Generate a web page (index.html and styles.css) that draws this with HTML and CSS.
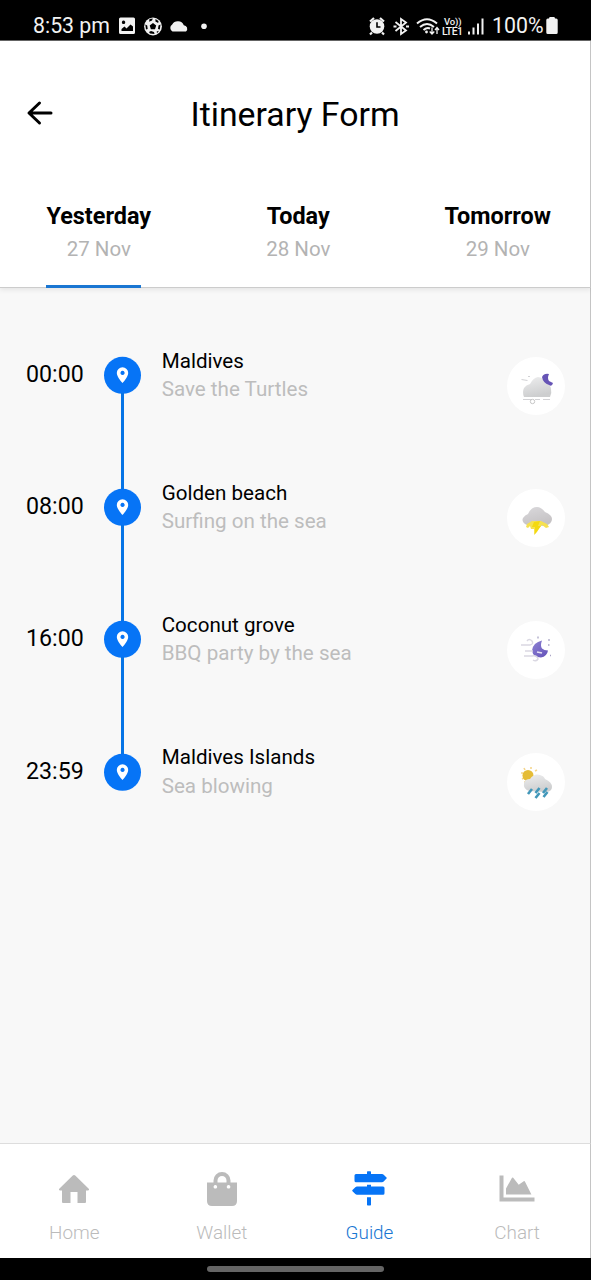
FILE: index.html
```html
<!DOCTYPE html>
<html lang="en">
<head>
<meta charset="utf-8">
<title>Itinerary Form</title>
<link rel="stylesheet" href="styles.css">
</head>
<body>
<div class="phone">
  <div class="status">
    <span class="clock">8:53 pm</span>
    <svg class="status-left" width="92" height="22" viewBox="0 0 92 22" fill="#f2f2f2">
      <path fill-rule="evenodd" d="M3.500 2.500h13q1.500 0 1.500 1.500v13.500q0 1.500-1.500 1.500h-13q-1.500 0-1.500-1.500v-13.500Q2 2.500 3.500 2.500ZM4.500 16h11.500v-4.500l-2.500-2-4 4-2-2-3 2.500ZM6.500 5.600a1.700 1.700 0 1 0 .1 0Z"/>
      <circle cx="36" cy="11.500" r="8.900"/>
      <path fill="#000" d="m36 8 3.200 2.400-1.200 3.800h-4.100l-1.200-3.800ZM32.500 4l3.300-.6L35 5.500l-2.900 1.200ZM38.500 4l3 1.900-.3 2.200-2.800-1.500ZM28.300 9.500l1.900 1 .5 3.500-1.700.5ZM43.500 9.500l-2 1-.5 3.500 1.800.5ZM32 17l2-1 3 1 .5 2-4.500-.5ZM39.700 16.500l2.300-.8-2 2.500Z"/>
      <path d="M55.500 16.500a4 4 0 0 1-.3-7 6.500 6.500 0 0 1 11.600.7 3.600 3.600 0 0 1 2.200 6.300Z"/>
      <circle cx="87" cy="11.300" r="2.800"/>
    </svg>
    <svg class="status-right" width="118" height="22" viewBox="0 0 118 22" fill="none" stroke="#f2f2f2" stroke-width="1.800">
      <circle cx="9" cy="11.500" r="7.300" fill="#f2f2f2" stroke="none"/>
      <path d="M2 6.500 6 3M16 6.500 12 3M4 17.500l-2 2M14 17.500l2 2" stroke-width="2.200"/>
      <path d="M9 7.300V12h3.500" stroke="#000" stroke-width="1.600"/>
      <path d="m27.500 7 10.500 8.500-5 3.500V4l5 3.500L27.500 16" stroke-width="1.800"/>
      <path d="M25.500 11.500h3M38 11.500h3"/>
      <path d="M49 8.500q10-8.500 20 0M52 12q7-6 14 0M55.500 15q3.500-3 6.500-1.500" stroke-width="2"/>
      <circle cx="58.500" cy="17" r="1.400" fill="#f2f2f2" stroke="none"/>
      <path d="M64 12.500v6.500m-2.300-2.500 2.300 2.500 2.300-2.500M69 19v-6.500m-2 2.500 2-2.500 2 2.500" stroke-width="1.300"/>
      <text class="lte" x="76" y="9.500" textLength="17.500">Vo))</text>
      <text class="lte large" x="74" y="19.500" textLength="21">LTE1</text>
      <path d="M101 16.500V19.500M105.500 12.500v7M110 8.500v11M114.500 3.500V19.500" stroke-width="2"/>
    </svg>
    <span class="percent">100%</span>
    <svg width="12" height="20" viewBox="0 0 12 20" fill="#f2f2f2"><path d="M4 1h4q1 0 1 1.500h1.200q1.500 0 1.500 1.500v12.500q0 1.500-1.500 1.500H1.800q-1.500 0-1.500-1.500V4q0-1.500 1.500-1.500H3Q3 1 4 1Z"/></svg>
  </div>

  <header class="header">
    <div class="topbar">
      <svg class="back" width="28" height="28" viewBox="0 0 28 28" fill="none" stroke="#000" stroke-width="3" stroke-linecap="round" stroke-linejoin="round"><path d="M25 14H3.500M13.500 4 3 14l10.500 10"/></svg>
      <h1 class="title">Itinerary Form</h1>
    </div>
    <div class="tabs">
      <div class="tab active"><b>Yesterday</b><span>27 Nov</span></div>
      <div class="tab"><b>Today</b><span>28 Nov</span></div>
      <div class="tab"><b>Tomorrow</b><span>29 Nov</span></div>
    </div>
  </header>

  <main class="timeline">
    <div class="stop">
      <span class="time">00:00</span>
      <div class="rail"><svg class="pin" width="37" height="38" viewBox="0 0 37 38"><use href="#pin"/></svg><i class="line"></i></div>
      <div class="info"><span class="place">Maldives</span><span class="note">Save the Turtles</span></div>
      <div class="weather"><svg width="58" height="58" viewBox="0 0 58 58">
        <path d="M17 40q-2-5 0-9 2-3 6-4 3-6 8-7 5 0 8 6 5 2 5 6 1 4-1 8Z" fill="url(#cloud)"/>
        <path d="M35 20q2-4 7-3-2 4 0 7l4 2q-1 4-4 2-6-2-7-8Z" fill="#6654b5"/>
        <path d="M16 42.500h9m3 0h5m3 0h7M14.500 22.500l6 1M21 19.500h2" fill="none" stroke="#d2d2d5" stroke-width="1.200"/>
        <circle cx="25.500" cy="44.500" r="2.200" fill="none" stroke="#c5c5c5"/>
      </svg></div>
    </div>
    <div class="stop">
      <span class="time">08:00</span>
      <div class="rail"><svg class="pin" width="37" height="38" viewBox="0 0 37 38"><use href="#pin"/></svg><i class="line"></i></div>
      <div class="info"><span class="place">Golden beach</span><span class="note">Surfing on the sea</span></div>
      <div class="weather"><svg width="58" height="58" viewBox="0 0 58 58">
        <path d="M20 36q-6-3-4-7 2-3 5-4 3-7 9-7 4 0 8 5 7 3 7 7 0 5-7 7Z" fill="url(#storm)"/>
        <path d="M19 38l1-3 5-3h9l6 3 2 3-3 1-4-3-2 2-3 5-3 3v-6h-3l-1-3-2 2Z" fill="#f6e150"/>
        <path d="m27 33 6-1-2 5h3l-6 8v-7h-3Z" fill="#f4d910"/>
      </svg></div>
    </div>
    <div class="stop">
      <span class="time">16:00</span>
      <div class="rail"><svg class="pin" width="37" height="38" viewBox="0 0 37 38"><use href="#pin"/></svg><i class="line"></i></div>
      <div class="info"><span class="place">Coconut grove</span><span class="note">BBQ party by the sea</span></div>
      <div class="weather"><svg width="58" height="58" viewBox="0 0 58 58">
        <path d="M35 19.500q-2 5 0 8 2 2 6 2-1 6-7 7-8 0-9-7 1-8 10-10Z" fill="url(#moon)"/>
        <path d="M14 24h9q4-1 2-4-3-3-5 0M18 30h8M17 35h8q5-1 6 3-2 3-5 1" fill="none" stroke="#dad8e2" stroke-width="1.400"/>
        <path d="m30 31 5 1" stroke="#e6e2f3" stroke-width="1.600"/>
        <path d="M31 15.500v2M42 18v2M41 24h1.500M43 34.500h1" stroke="#aaa5c5" stroke-width="1.300"/>
      </svg></div>
    </div>
    <div class="stop">
      <span class="time">23:59</span>
      <div class="rail"><svg class="pin" width="37" height="38" viewBox="0 0 37 38"><use href="#pin"/></svg></div>
      <div class="info"><span class="place">Maldives Islands</span><span class="note">Sea blowing</span></div>
      <div class="weather"><svg width="58" height="58" viewBox="0 0 58 58">
        <path d="M14 20h2M15 26l2-1M17 15l1 2M24 14v2M28 18l2-1M18 30v-2" stroke="#f5d68d" stroke-width="1.600"/>
        <circle cx="21" cy="22.500" r="5.500" fill="#e5bc36"/>
        <path d="M22 38q-6-2-5-8 1-4 6-4 4-6 10-4 4 1 5 4 7 3 7 8 0 5-7 5Z" fill="url(#cloud)"/>
        <path d="m21 41 4-5M28.500 40l4-5M36 40l4-5M28.500 45l4-5M36.500 44l4-5" stroke="#4297b9" stroke-width="2.600"/>
      </svg></div>
    </div>
  </main>

  <nav class="nav">
    <div class="item"><svg width="36" height="36" viewBox="0 0 36 36" fill="currentColor"><path d="M18 4q.7 0 1.500.8L33 18q.5 1.200-1 1.500h-2V31q0 1-1 1h-7.500V21h-7v11H7q-1 0-1-1V19.500H4q-1.500-.3-1-1.500L16.500 4.800Q17.300 4 18 4Z"/></svg><span>Home</span></div>
    <div class="item"><svg width="36" height="36" viewBox="0 0 36 36" fill="currentColor"><path fill-rule="evenodd" d="M3 11.500h6.500V9.500a8.500 8.500 0 0 1 17 0v2H33V30q0 5-5 5H8q-5 0-5-5ZM13.500 11.500h9v-2a4.500 4.500 0 0 0-9 0ZM11.300 14a1.800 1.800 0 1 0 .1 0ZM24.500 14a1.800 1.800 0 1 0 .1 0Z"/></svg><span>Wallet</span></div>
    <div class="item selected"><svg width="36" height="36" viewBox="0 0 36 36" fill="currentColor"><path d="M16 3V1q0-.7.700-.7h2.600q.7 0 .7.700v2h11q1 0 1.700.7L35.500 6.500q.6.500 0 1.100L32.700 10.500q-.7.700-1.700.7H5q-1.500 0-1.500-1.500V4.500Q3.500 3 5 3ZM16 15.500v-1.800h4v1.800h12q1.500 0 1.500 1.500v5.300q0 1.500-1.500 1.500H6q-1 0-1.700-.7L1.500 20.200q-.6-.6 0-1.200l2.800-2.800q.7-.7 1.700-.7ZM16 26.300h4v7.500q0 .8-.8.800h-2.400q-.8 0-.8-.8Z"/></svg><span>Guide</span></div>
    <div class="item"><svg width="36" height="36" viewBox="0 0 36 36" fill="currentColor"><path d="M.5 4.500h4v22h31v4H.5ZM7 23.500v-6l6-10.700q.5-.7 1.200 0l5.500 7 5-3.500q.7-.5 1.200.2l6.500 13Z"/></svg><span>Chart</span></div>
  </nav>
  <div class="gesture"><i class="handle"></i></div>
</div>

<svg class="defs" width="0" height="0">
  <defs>
    <g id="pin">
      <circle cx="18.500" cy="19.300" r="18.500" fill="#0674f6"/>
      <path fill-rule="evenodd" fill="#fff" d="M18.500 11.300a5.700 5.700 0 0 1 5.700 5.700c0 4-5.700 10-5.700 10s-5.700-6-5.700-10a5.700 5.700 0 0 1 5.700-5.700ZM18.500 14.800a2.100 2.100 0 1 0 .1 0Z"/>
    </g>
    <linearGradient id="cloud" x1="0" y1="0" x2=".3" y2="1"><stop offset="0" stop-color="#eeeeef"/><stop offset="1" stop-color="#cdcecf"/></linearGradient>
    <linearGradient id="storm" x1="0" y1="0" x2=".4" y2="1"><stop offset="0" stop-color="#dad9dc"/><stop offset="1" stop-color="#c5c2c4"/></linearGradient>
    <linearGradient id="moon" x1="0" y1="0" x2="1" y2="1"><stop offset="0" stop-color="#8e83d4"/><stop offset="1" stop-color="#6351b8"/></linearGradient>
  </defs>
</svg>
</body>
</html>
```
FILE: styles.css
```css
* { box-sizing: border-box; }
body { margin: 0; font-family: Roboto, "Liberation Sans", sans-serif; background: #000; }
svg { display: block; flex: none; }
.defs { position: absolute; }
.phone { width: 591px; height: 1280px; display: flex; flex-direction: column; overflow: hidden; }

.status { height: 41px; flex: none; display: flex; align-items: center; padding: 12px 0 0 33px; color: #f2f2f2; border-bottom: 1px solid #666; }
.clock, .percent { font-size: 21.3px; line-height: 26px; white-space: nowrap; }
.clock { width: 84px; }
.percent { width: 54px; margin-left: 6px; }
.status-right { margin-left: 159px; }
.lte { font: 500 9.500px Roboto, sans-serif; fill: #f2f2f2; stroke: none; }
.large { font-size: 10.500px; }

.header { position: relative; height: 247px; flex: none; background: #fff; border-right: 1px solid #c4c4c4; border-bottom: 1px solid #ccc; box-shadow: 0 2px 5px rgba(0, 0, 0, .08); z-index: 1; }
.topbar { display: grid; grid-template-columns: 80px 1fr 80px; align-items: center; height: 145px; }
.back { margin-left: 26px; margin-top: -2px; }
.title { margin: 2px 0 0; text-align: center; font-size: 33.8px; font-weight: 400; line-height: 40px; color: #000; }
.tabs { display: grid; grid-template-columns: repeat(3, 199.500px); height: 101px; padding-top: 16px; margin-left: -1px; }
.tab { display: flex; flex-direction: column; align-items: center; gap: 3.500px; position: relative; }
.tab b { font-size: 23.400px; line-height: 29px; color: #000; }
.tab span { font-size: 20.500px; line-height: 29px; color: #b3b3b3; }
.tab.active::after { content: ""; position: absolute; left: 47px; bottom: -1px; width: 95px; height: 3px; background: #1a76d2; }

.timeline { flex: 1; background: #f8f8f8; border-right: 1px solid #c4c4c4; padding-top: 57px; }
.stop { display: grid; grid-template-columns: 104px 58px 345px 58px; height: 132.200px; align-items: start; }
.time { padding: 14px 0 0 26px; font-size: 23.200px; line-height: 30px; color: #000; }
.rail { height: 132.200px; padding-top: 11px; display: flex; flex-direction: column; }
.line { flex: 1; width: 3px; margin: -1px 0 -12px 17px; background: #0674e6; }
.info { display: flex; flex-direction: column; padding-top: 1.500px; margin-left: -.3px; }
.place, .note { font-size: 20.600px; line-height: 28.500px; }
.place { color: #000; }
.note { color: #bdbdbd; }
.weather { width: 58px; height: 58px; margin-top: 11.500px; border-radius: 50%; background: #fff; }
.weather svg { filter: blur(.35px); }

.nav { height: 115px; flex: none; display: grid; grid-template-columns: repeat(4, 147.600px); background: #fff; border-top: 1px solid #ddd; border-right: 1px solid #c4c4c4; padding-left: .5px; }
.item { display: flex; flex-direction: column; align-items: center; padding-top: 27px; gap: 13px; color: #bbb; }
.item span { font-size: 18.900px; font-weight: 300; line-height: 26px; }
.selected { color: #0674f6; }
.selected span { color: #1876d2; }
.gesture { height: 22px; flex: none; display: flex; justify-content: center; padding-top: 8px; background: #000; }
.handle { width: 177px; height: 6px; border-radius: 3px; background: #656565; }
```
